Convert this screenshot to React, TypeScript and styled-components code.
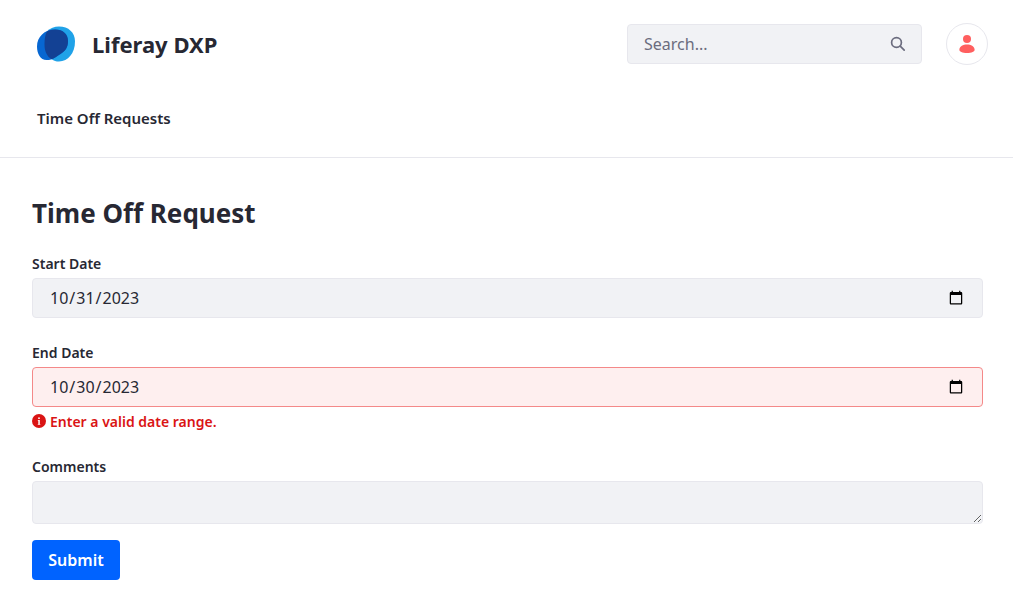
import React, { useState } from "react";
import styled, { createGlobalStyle, css } from "styled-components";

const GlobalStyle = createGlobalStyle`
  *, *::before, *::after { box-sizing: border-box; }
  body {
    margin: 0;
    background: #fff;
    color: #272833;
    font-family: "Noto Sans", sans-serif;
    font-size: 16px;
    line-height: 24px;
  }
`;

const Header = styled.header`
  padding: 23px 25px 27px 37px;
  border-bottom: 1px solid #e7e7ed;
`;

const TopBar = styled.div`
  display: flex;
  align-items: center;
  justify-content: space-between;
  gap: 24px;
`;

const Brand = styled.a`
  display: flex;
  align-items: center;
  gap: 17px;
  color: inherit;
  font-size: 22px;
  font-weight: 700;
  line-height: 32px;
  text-decoration: none;
`;

const Tools = styled.div`
  display: flex;
  align-items: center;
  gap: 24px;
`;

const controlStyle = css`
  border: 1px solid #e7e7ed;
  border-radius: 4px;
  background: #f1f2f5;
  color: #272833;
  font-family: inherit;
  font-size: 16px;
  line-height: 24px;
`;

const SearchForm = styled.form`
  ${controlStyle}
  display: flex;
  align-items: center;
  width: 295px;
  height: 40px;
  padding: 0 15px 0 16px;
`;

const SearchInput = styled.input`
  flex: 1;
  min-width: 0;
  padding: 0;
  border: 0;
  outline: 0;
  background: none;
  color: inherit;
  font: inherit;
  &::placeholder { color: #6b6c7e; }
`;

const SearchButton = styled.button`
  display: flex;
  padding: 0;
  border: 0;
  background: none;
  color: #6b6c7e;
  cursor: pointer;
`;

const Avatar = styled.button`
  display: flex;
  align-items: center;
  justify-content: center;
  width: 42px;
  height: 42px;
  padding: 0;
  border: 1px solid #e7e7ed;
  border-radius: 50%;
  background: #fff;
  color: #ff5f5f;
  cursor: pointer;
`;

const Nav = styled.nav`
  display: flex;
  padding: 41px 0 0;
`;

const NavLink = styled.a`
  color: inherit;
  font-size: 15px;
  font-weight: 600;
  text-decoration: none;
`;

const Main = styled.main`
  padding: 37px 30px 25px 32px;
`;

const Title = styled.h1`
  margin: 0 0 22px;
  font-size: 26px;
  font-weight: 700;
  line-height: 36px;
`;

const Field = styled.div<{ $gap: number }>`
  display: flex;
  flex-direction: column;
  margin-bottom: ${(p) => p.$gap}px;
`;

const Label = styled.label`
  margin-bottom: 4px;
  font-size: 14px;
  font-weight: 600;
  line-height: 21px;
`;

const DateInput = styled.input<{ $invalid?: boolean }>`
  ${controlStyle}
  width: 100%;
  height: 40px;
  padding: 0 16px;
  ${(p) => p.$invalid && css`
    border-color: #f48989;
    background: #feefef;
  `}
`;

const TextArea = styled.textarea`
  ${controlStyle}
  display: block;
  width: 100%;
  height: 43px;
  padding: 8px 16px;
  resize: vertical;
`;

const ErrorText = styled.p`
  display: flex;
  align-items: center;
  gap: 4px;
  margin: 4px 0 0;
  color: #da1414;
  font-size: 14px;
  font-weight: 600;
  line-height: 21px;
`;

const SubmitButton = styled.button`
  min-width: 88px;
  height: 40px;
  padding: 0 16px;
  border: 0;
  border-radius: 4px;
  background: #0063ff;
  color: #fff;
  font-family: inherit;
  font-size: 16px;
  font-weight: 600;
  line-height: 24px;
  cursor: pointer;
`;

const ErrorIcon = styled.svg`
  margin-bottom: 2px;
`;

const lightBlob =
  "M10 5.500C13 2 17.500 .5 22 .5C31.500 .5 38 6.500 38 15.500C38 27 31 35.500 22 35.500C19 35.500 17 34.800 14.500 33.200C9.500 30 7.500 25 7.500 18C7.500 13 8 9 10 5.500Z";
const deepBlob =
  "M0 20.500C0 11 7.500 3.500 18 3.500C26 3.500 31 8 31 15C31 21 28.500 25 23.500 28C20 30 18 32 14.500 33.200C12.500 34 11 34 9.500 34C3.500 34 0 28 0 20.500Z";

const Logo = () => (
  <svg width="38" height="36" viewBox="0 0 38 36" aria-hidden="true">
    <defs>
      <clipPath id="logo-overlap">
        <path d={lightBlob} />
      </clipPath>
    </defs>
    <path fill="#20a2e8" d={lightBlob} />
    <path fill="#0767d2" d={deepBlob} />
    <path fill="#134194" clipPath="url(#logo-overlap)" d={deepBlob} />
  </svg>
);

export default function App() {
  const [start, setStart] = useState("2023-10-31");
  const [end, setEnd] = useState("2023-10-30");
  const invalid = end < start;

  return (
    <>
      <GlobalStyle />
      <Header>
        <TopBar>
          <Brand href="#">
            <Logo />
            Liferay DXP
          </Brand>
          <Tools>
            <SearchForm role="search" onSubmit={(e) => e.preventDefault()}>
              <SearchInput type="text" placeholder="Search..." aria-label="Search" />
              <SearchButton type="submit" aria-label="Submit search">
                <svg width="16" height="16" viewBox="0 0 16 16" fill="none" stroke="currentColor" strokeWidth="1.7" strokeLinecap="round">
                  <circle cx="6.500" cy="6.500" r="4.900" />
                  <path d="M10.200 10.200L14.200 14.200" />
                </svg>
              </SearchButton>
            </SearchForm>
            <Avatar type="button" aria-label="User menu">
              <svg width="16" height="18" viewBox="0 0 16 18" fill="currentColor">
                <circle cx="8" cy="4" r="4" />
                <path d="M.4 14.200C.8 11.400 4 9.400 8 9.400S15.200 11.400 15.600 14.200C16 16.800 12.500 18 8 18S0 16.800 .4 14.200Z" />
              </svg>
            </Avatar>
          </Tools>
        </TopBar>
        <Nav>
          <NavLink href="#">Time Off Requests</NavLink>
        </Nav>
      </Header>
      <Main>
        <Title>Time Off Request</Title>
        <form onSubmit={(e) => e.preventDefault()}>
          <Field $gap={24}>
            <Label htmlFor="start">Start Date</Label>
            <DateInput id="start" type="date" value={start} onChange={(e) => setStart(e.target.value)} />
          </Field>
          <Field $gap={24}>
            <Label htmlFor="end">End Date</Label>
            <DateInput
              id="end"
              type="date"
              value={end}
              $invalid={invalid}
              aria-invalid={invalid}
              aria-describedby="end-error"
              onChange={(e) => setEnd(e.target.value)}
            />
            {invalid && (
              <ErrorText id="end-error">
                <ErrorIcon width="14" height="14" viewBox="0 0 14 14" aria-hidden="true">
                  <circle cx="7" cy="7" r="7" fill="#da1414" />
                  <circle cx="7" cy="4.200" r=".9" fill="#fff" />
                  <path fill="#fff" d="M5.800 6H7.800V10H8.300V10.800H5.800V10H6.300V6.800H5.800Z" />
                </ErrorIcon>
                Enter a valid date range.
              </ErrorText>
            )}
          </Field>
          <Field $gap={16}>
            <Label htmlFor="comments">Comments</Label>
            <TextArea id="comments" />
          </Field>
          <SubmitButton type="submit">Submit</SubmitButton>
        </form>
      </Main>
    </>
  );
}
